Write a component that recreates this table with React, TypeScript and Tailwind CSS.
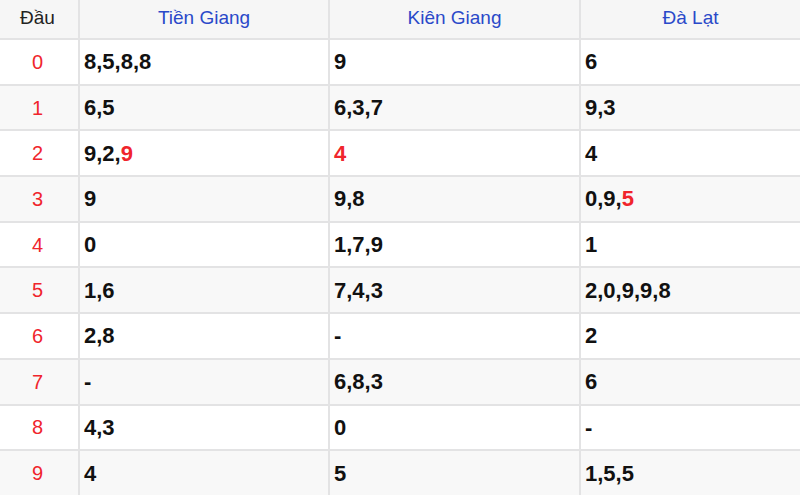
type Cell = { text: string; hot?: string };

const rows: { head: string; cells: Cell[] }[] = [
  { head: "0", cells: [{ text: "8,5,8,8" }, { text: "9" }, { text: "6" }] },
  { head: "1", cells: [{ text: "6,5" }, { text: "6,3,7" }, { text: "9,3" }] },
  { head: "2", cells: [{ text: "9,2,", hot: "9" }, { text: "", hot: "4" }, { text: "4" }] },
  { head: "3", cells: [{ text: "9" }, { text: "9,8" }, { text: "0,9,", hot: "5" }] },
  { head: "4", cells: [{ text: "0" }, { text: "1,7,9" }, { text: "1" }] },
  { head: "5", cells: [{ text: "1,6" }, { text: "7,4,3" }, { text: "2,0,9,9,8" }] },
  { head: "6", cells: [{ text: "2,8" }, { text: "-" }, { text: "2" }] },
  { head: "7", cells: [{ text: "-" }, { text: "6,8,3" }, { text: "6" }] },
  { head: "8", cells: [{ text: "4,3" }, { text: "0" }, { text: "-" }] },
  { head: "9", cells: [{ text: "4" }, { text: "5" }, { text: "1,5,5" }] },
];

const provinces = ["Tiền Giang", "Kiên Giang", "Đà Lạt"];

export default function App() {
  return (
    <div className="w-[800px] h-[495px] overflow-hidden bg-white font-['Liberation_Sans',Arial,sans-serif]">
      <table className="w-full table-fixed border-collapse">
        <colgroup>
          <col className="w-[79px]" />
          <col className="w-[250px]" />
          <col className="w-[251px]" />
          <col />
        </colgroup>
        <thead>
          <tr className="h-[39px] bg-[#f6f6f6]">
            <th className="border-b-2 border-r-2 border-[#e3e3e4] text-center align-middle text-[19px] font-normal text-[#222] pb-[2px] pr-[3px]">
              Đầu
            </th>
            {provinces.map((p, i) => (
              <th
                key={p}
                className={`border-b-2 border-[#e3e3e4] text-center align-middle text-[19px] font-normal text-[#2a49c9] pb-[2px] ${
                  i < 2 ? "border-r-2" : ""
                }`}
              >
                {p}
              </th>
            ))}
          </tr>
        </thead>
        <tbody>
          {rows.map((r, idx) => (
            <tr key={r.head} className={`h-[45.7px] ${idx % 2 === 1 ? "bg-[#f8f8f8]" : "bg-white"}`}>
              <td className="border-b-2 border-r-2 border-[#e3e3e4] text-center align-middle text-[20px] text-[#f0252c] pr-[3px]">
                {r.head}
              </td>
              {r.cells.map((c, i) => (
                <td
                  key={i}
                  className={`border-b-2 border-[#e3e3e4] pl-[4px] align-middle text-[22px] font-bold text-[#111] ${
                    i < 2 ? "border-r-2" : ""
                  }`}
                >
                  {c.text}
                  {c.hot && <span className="text-[#f0252c]">{c.hot}</span>}
                </td>
              ))}
            </tr>
          ))}
        </tbody>
      </table>
    </div>
  );
}
